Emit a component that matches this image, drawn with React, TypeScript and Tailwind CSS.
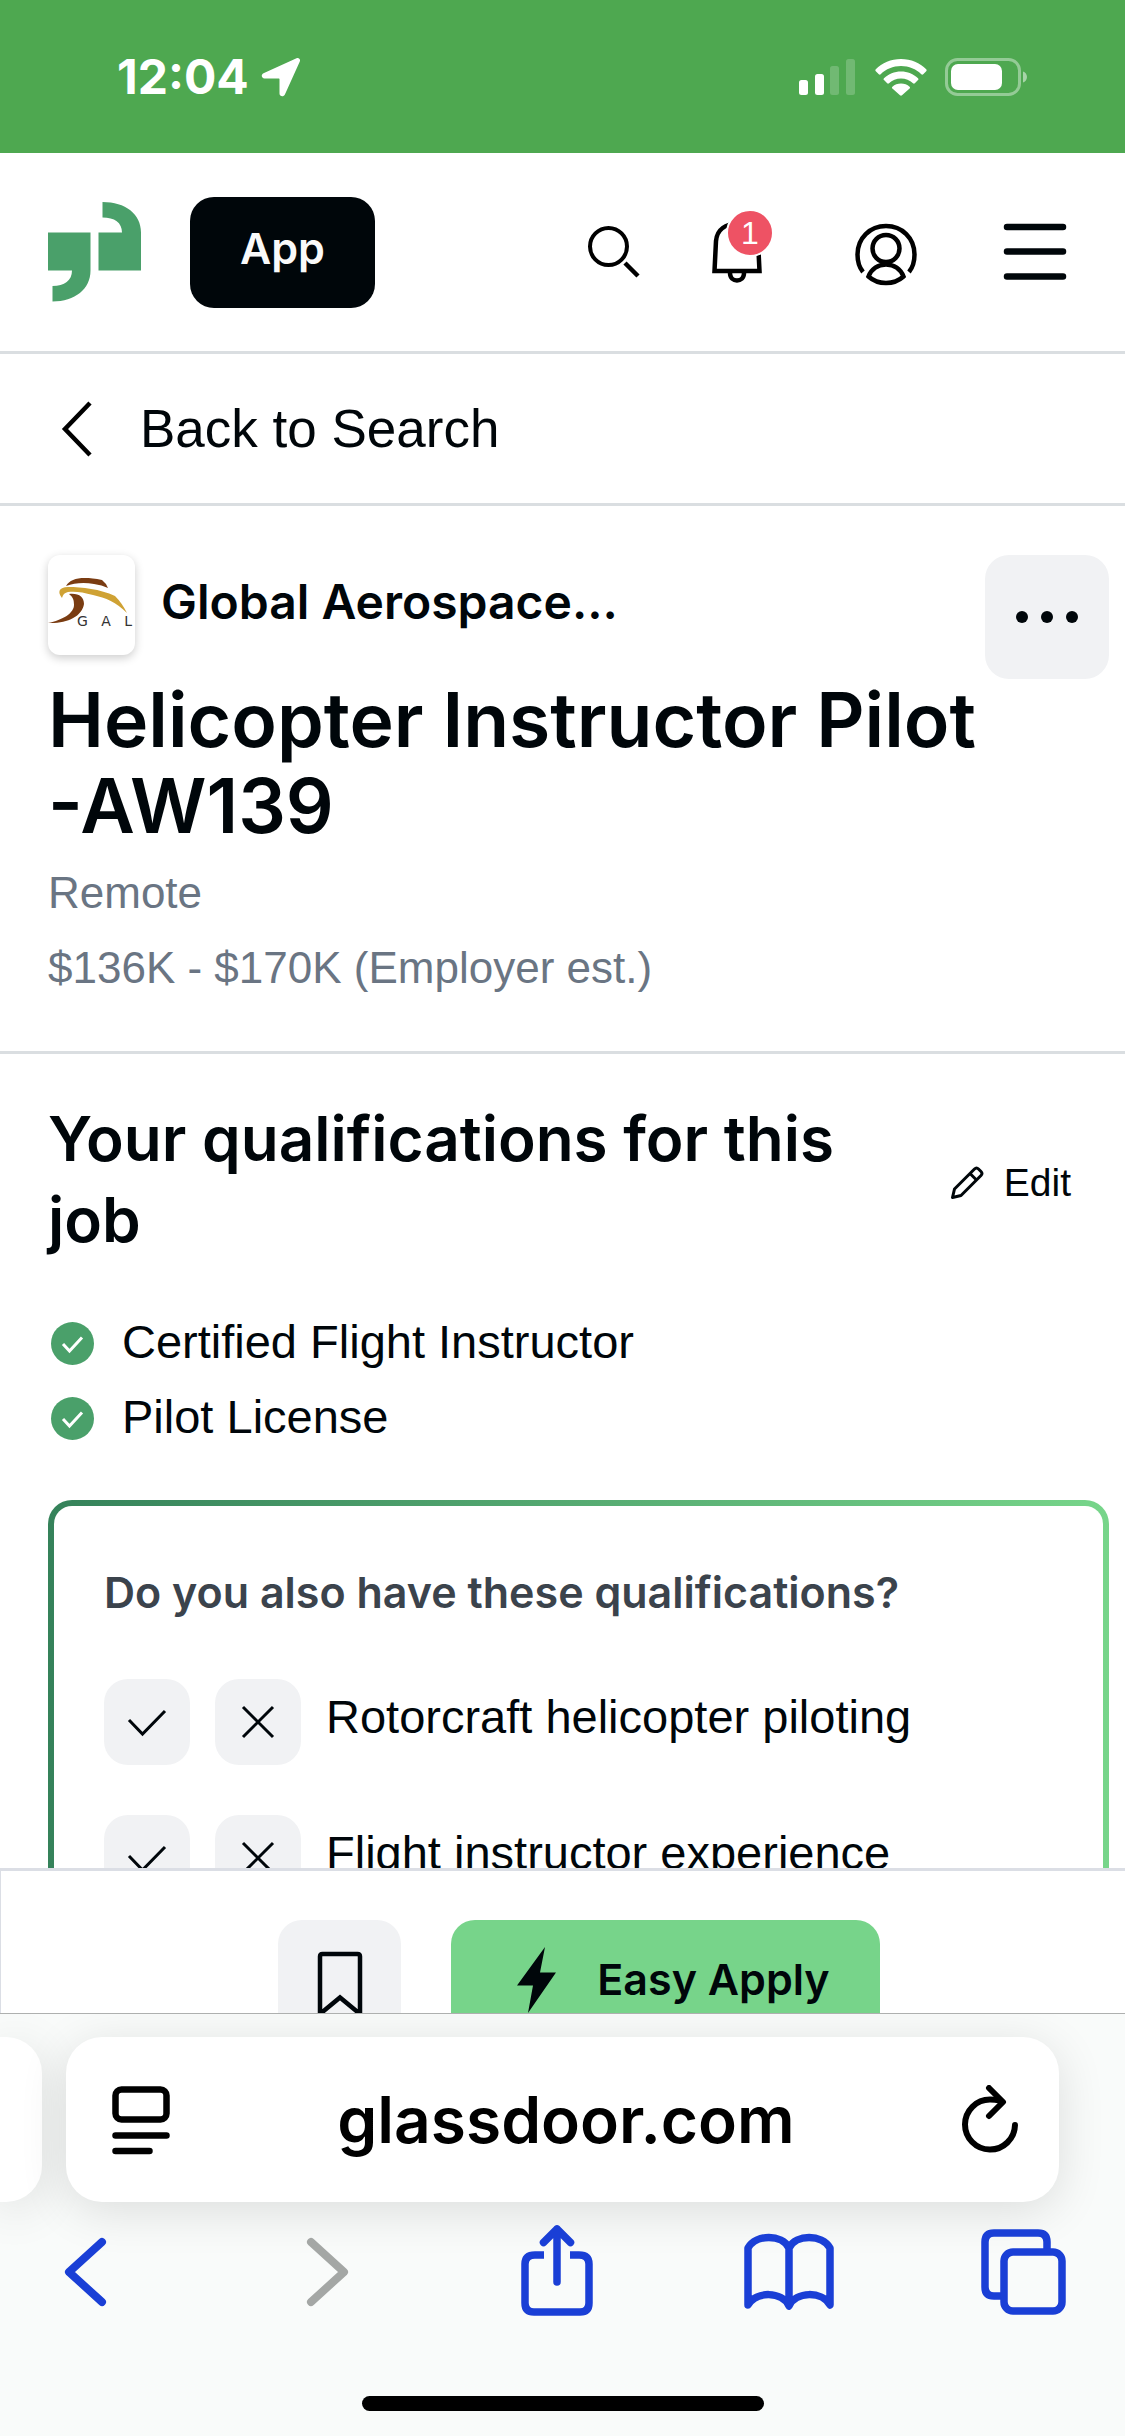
const HAVE = ["Certified Flight Instructor", "Pilot License"];

const ASK = ["Rotorcraft helicopter piloting", "Flight instructor experience"];

function StatusBar() {
  return (
    <div className="flex h-[153px] shrink-0 items-center justify-between bg-[#4ea850] pl-[117px] pr-[97px] text-white">
      <div className="flex items-center gap-3">
        <span className="font-[Inter,sans-serif] text-[48px] font-bold leading-none">12:04</span>
        <svg width="40" height="40" viewBox="0 0 40 40" fill="currentColor">
          <path d="M35.500 1.200 2.500 16.200c-2.800 1.300-2 5.300 1 5.300h14.400c.4 0 .6.200.6.600v14.400c0 3.100 4.100 3.900 5.400 1L38.800 4.500c1-2.200-1.100-4.300-3.300-3.300Z" />
        </svg>
      </div>
      <div className="flex items-center gap-[18px]">
        <svg width="58" height="38" viewBox="0 0 58 38" fill="currentColor">
          <rect x="0" y="22" width="9" height="15" rx="2.500" />
          <rect x="16" y="16" width="9" height="21" rx="2.500" />
          <rect x="31" y="8" width="9" height="29" rx="2.500" opacity=".2" />
          <rect x="47" y="1" width="9" height="36" rx="2.500" opacity=".2" />
        </svg>
        <svg width="52" height="38" viewBox="0 0 52 38" fill="currentColor">
          <path d="M26 1C16 1 7 5 .8 11.300c-.6.600-.6 1.300 0 1.900l3 3c.6.600 1.300.600 1.900 0C11 11 18 8 26 8s15 3 20.300 8.200c.6.600 1.300.600 1.900 0l3-3c.6-.600.6-1.300 0-1.900C45 5 36 1 26 1Z" />
          <path d="M26 13.500c-6.600 0-12.500 2.500-17 6.700-.6.600-.6 1.300 0 1.900l3.200 3.200c.5.500 1.200.5 1.800 0 3.200-3 7.400-4.800 12-4.800s8.800 1.800 12 4.800c.6.500 1.300.5 1.800 0l3.200-3.200c.6-.600.6-1.300 0-1.900-4.500-4.200-10.400-6.700-17-6.700Z" />
          <path d="M26 25.500c-3.300 0-6.300 1.200-8.600 3.200-.6.600-.6 1.300 0 1.900l7.600 6.600c.6.600 1.400.6 2 0l7.600-6.600c.6-.6.600-1.300 0-1.900-2.300-2-5.300-3.200-8.600-3.200Z" />
        </svg>
        <svg width="83" height="38" viewBox="0 0 83 38" fill="none">
          <rect x="1.500" y="1.500" width="73" height="35" rx="11" stroke="white" strokeOpacity=".4" strokeWidth="3" />
          <rect x="6" y="6" width="51" height="26" rx="7" fill="white" />
          <path d="M78 13.500c2.300.7 4 3 4 5.500s-1.700 4.800-4 5.500Z" fill="white" fillOpacity=".5" />
        </svg>
      </div>
    </div>
  );
}

function Header() {
  return (
    <header className="flex h-[201px] shrink-0 items-center justify-between border-b-[3px] border-[#dadee1] pl-12 pr-[58px]">
      <div className="flex items-center gap-[49px]">
        <a href="#" aria-label="Home">
          <svg width="93" height="100" viewBox="0 0 93 100" fill="#4aa06a">
            <path d="M0 30.500h42.500v38C42.500 87 27 99.500 4.500 99.500V84c12 0 19.500-5.500 19.500-15.500H0Z" />
            <path d="M50.500 68.500H93V30.500C93 12 77.500 0 54.500 0v15.500c12 0 19.500 5 19.500 15H50.500Z" />
          </svg>
        </a>
        <button className="flex h-[111px] items-center rounded-3xl bg-[#00060a] px-[50px] pb-2 font-[Inter,sans-serif] text-[43px] font-semibold text-[#fafafa]">
          App
        </button>
      </div>
      <div className="flex items-center">
        <button aria-label="Search" className="mr-[61px]">
          <svg width="64" height="64" viewBox="0 0 64 64" fill="none" stroke="black" strokeWidth="4">
            <ellipse cx="27.500" cy="26.500" rx="18.500" ry="18.500" />
            <path d="m44 43 13 13" strokeWidth="4.500" />
          </svg>
        </button>
        <button aria-label="Notifications, 1 new" className="relative mr-[84px]">
          <svg width="64" height="64" viewBox="0 0 64 64" fill="none" stroke="black" strokeWidth="4.500">
            <path d="M8.500 51 10 21C11 9 20 4 31 4s20 5 21 17l1.500 30Z" />
            <path d="M24 53c0 10 14 10 14 0" />
          </svg>
          <span className="absolute -top-[11px] left-5 flex size-12 items-center justify-center rounded-full border-2 border-white bg-[#ee5264] text-[32px] leading-none text-white">
            1
          </span>
        </button>
        <button aria-label="Profile" className="mr-[85px]">
          <svg width="64" height="64" viewBox="0 0 64 64" fill="none" stroke="black" strokeWidth="4.500" className="overflow-visible">
            <path d="M9 52C4.500 46.500 3.500 40 3.500 34.500 3.500 18 16 6 32 6s28.500 12 28.500 28.500C60.500 40 59.500 46.500 55 52" />
            <circle cx="32" cy="28.500" r="13.500" />
            <path d="M14.500 56.500C17.500 49 24 44.500 32 44.500S46.500 49 49.500 56.500C44.500 61 39 63 32 63S19.500 61 14.500 56.500Z" />
          </svg>
        </button>
        <button aria-label="Menu">
          <svg width="64" height="64" viewBox="0 0 64 64" stroke="#00060a" strokeWidth="6.500" strokeLinecap="round">
            <path d="M4 7h56M4 31.500h56M4 56.500h56" />
          </svg>
        </button>
      </div>
    </header>
  );
}

function GalLogo() {
  return (
    <div className="h-[100px] w-[87px] shrink-0 overflow-hidden rounded-xl bg-white shadow-[0_3px_10px_rgba(0,0,0,0.2)]">
      <svg width="87" height="100" viewBox="0 0 87 100">
        <path d="M18 31C23 23 34 21 54 25q4 3 6 8-6-3-14-4c-10-2-20-1-28 2Z" fill="#7a3c12" />
        <path d="M14 43c-5-6-3-11 6-11 14 0 32 2 47 9q7 7 12 17C68 47 58 43 45 40c-10-3-19-4-25-3-4 1-5 3-6 6Z" fill="#cfa234" />
        <path d="M21 39c10-1 15 3 15 10C34 62 18 69 0 68c15-3 26-10 26-18 0-5-1-8-5-11Z" fill="#7a3c12" />
        <text x="29" y="71" fontSize="14" fontFamily="DejaVu Sans, sans-serif" fill="#333">
          G&nbsp;&nbsp;&nbsp;A&nbsp;&nbsp;&nbsp;L
        </text>
      </svg>
    </div>
  );
}

function JobSummary() {
  return (
    <section className="flex shrink-0 items-start border-b-[3px] border-[#dadee1] pb-[46px] pl-12 pr-4 pt-[49px]">
      <div className="flex-1">
        <div className="flex h-[100px] items-start gap-[26px]">
          <GalLogo />
          <p className="font-[Inter,sans-serif] text-[48px] font-semibold leading-[94px]">Global Aerospace...</p>
        </div>
        <h1 className="mt-[22px] font-[Inter,sans-serif] text-[75px] font-semibold leading-[86px]">
          Helicopter Instructor Pilot
          <br />
          -AW139
        </h1>
        <div className="mt-[6px] text-[44px] leading-[75px] text-[#6a7583]">
          <p>Remote</p>
          <p>$136K - $170K (Employer est.)</p>
        </div>
      </div>
      <button aria-label="More options" className="flex size-[124px] shrink-0 items-center justify-center gap-[13px] rounded-3xl bg-[#f1f2f4]">
        <span className="size-3 rounded-full bg-[#00060a]" />
        <span className="size-3 rounded-full bg-[#00060a]" />
        <span className="size-3 rounded-full bg-[#00060a]" />
      </button>
    </section>
  );
}

function AskRow({ label }: { label: string }) {
  return (
    <li className="flex items-start gap-[25px]">
      <button aria-label={`I have ${label}`} className="rounded-3xl bg-[#f1f2f4]">
        <svg width="86" height="86" viewBox="0 0 86 86" fill="none" stroke="#00060a" strokeWidth="3">
          <path d="m25 41 13.500 14L61 32" />
        </svg>
      </button>
      <button aria-label={`I do not have ${label}`} className="rounded-3xl bg-[#f1f2f4]">
        <svg width="86" height="86" viewBox="0 0 86 86" fill="none" stroke="#00060a" strokeWidth="3">
          <path d="m28 28 30 30M58 28 28 58" />
        </svg>
      </button>
      <span className="text-[47px] leading-[75px]">{label}</span>
    </li>
  );
}

function Qualifications() {
  return (
    <section className="pl-12 pr-4 pt-[44px]">
      <div className="flex items-center">
        <h2 className="flex-1 font-[Inter,sans-serif] text-[62px] font-semibold leading-[81px]">
          Your qualifications for this job
        </h2>
        <button className="flex shrink-0 items-center gap-5 px-[38px] pt-2 text-[39px]">
          <svg width="34" height="34" viewBox="0 0 34 34" fill="none" stroke="#00060a" strokeWidth="3">
            <path d="m2.500 31.500 2-8.500L24.500 3q2-2 4 0l2.500 2.500q2 2 0 4L11 29.500Z" strokeLinejoin="round" />
            <path d="m20 7.500 6.500 6.500" />
          </svg>
          Edit
        </button>
      </div>

      <ul className="mt-11 text-[47px] leading-[75px]">
        {HAVE.map((q) => (
          <li key={q} className="flex items-center gap-7 pl-[3px]">
            <svg width="43" height="43" viewBox="0 0 43 43" className="mt-1">
              <circle cx="21.500" cy="21.500" r="21.500" fill="#4aa06a" />
              <path d="m12 22 6.500 7L31 15.500" fill="none" stroke="white" strokeWidth="3" />
            </svg>
            {q}
          </li>
        ))}
      </ul>

      {/* Gradient frame */}
      <div className="mt-[46px] rounded-3xl bg-linear-to-r from-[#35825a] to-[#77d58a] p-[6px]">
        <div className="rounded-[18px] bg-white px-[50px] pb-12 pt-[56px]">
          <h3 className="font-[Inter,sans-serif] text-[43px] font-semibold leading-[60px] text-[#3b434c]">
            Do you also have these qualifications?
          </h3>
          <ul className="mt-[57px] space-y-[50px]">
            {ASK.map((q) => (
              <AskRow key={q} label={q} />
            ))}
          </ul>
        </div>
      </div>
    </section>
  );
}

function ApplyBar() {
  return (
    <div className="flex h-[145px] shrink-0 items-start justify-center gap-[50px] overflow-hidden border-l border-t-[3px] border-[#dbdee5] bg-white pl-12 pr-4 pt-[49px]">
      <button aria-label="Save job" className="flex h-[123px] w-[123px] shrink-0 justify-center rounded-3xl bg-[#f1f2f4] pt-[31px]">
        <svg width="46" height="66" viewBox="0 0 46 66" fill="none" stroke="#00060a" strokeWidth="4.500">
          <path d="M3 63V5.500Q3 3 5.500 3h35Q43 3 43 5.500V63L23 46.500Z" />
        </svg>
      </button>
      <button className="flex h-[123px] shrink-0 items-center gap-10 rounded-3xl bg-[#77d48a] pb-1 pl-[66px] pr-[50px] font-[Inter,sans-serif] text-[43px] font-semibold">
        <svg width="40" height="66" viewBox="0 0 40 66" fill="#00060a">
          <path d="M28 0 0 38.500h16L11 66l28-40.500H23Z" />
        </svg>
        Easy Apply
      </button>
    </div>
  );
}

function BrowserBar() {
  return (
    <footer className="shrink-0 overflow-hidden border-t border-[#aeb0af] bg-[#f9fbfa] pb-[25px] pt-[23px]">
      <div className="flex h-[165px] gap-6 pr-[66px]">
        <div className="w-[42px] shrink-0 rounded-r-[36px] bg-white shadow-[0_9px_48px_rgba(0,0,0,0.12)]" />
        <div className="flex flex-1 items-center justify-between rounded-[36px] bg-white pl-[45px] pr-10 shadow-[0_9px_48px_rgba(0,0,0,0.12)]">
          <button aria-label="Page menu">
            <svg width="60" height="70" viewBox="0 0 60 70" fill="none" stroke="black" strokeWidth="6.500" strokeLinecap="round">
              <rect x="4.500" y="4.500" width="51" height="30" rx="6" />
              <path d="M4.500 50.500h51M4.500 66h34" />
            </svg>
          </button>
          <span className="font-[Inter,sans-serif] text-[64px] font-semibold text-black">glassdoor.com</span>
          <button aria-label="Reload">
            <svg width="58" height="70" viewBox="0 0 58 70" fill="none" stroke="black" strokeWidth="6" strokeLinecap="round" strokeLinejoin="round">
              <path d="M39 15.500Q34 14.500 29 14.500A25 25 0 1 0 54 40" />
              <path d="m28 3 14 14-14 14" />
            </svg>
          </button>
        </div>
      </div>

      <nav className="mt-[22px] flex justify-between pl-10 pr-[57px] text-[#1a3fd6]">
        <button aria-label="Back">
          <svg width="92" height="92" viewBox="0 0 92 92" fill="none" stroke="currentColor" strokeWidth="8" strokeLinecap="round" strokeLinejoin="round">
            <path d="M62 18 29 48l33 30" />
          </svg>
        </button>
        <button aria-label="Forward" disabled className="text-[#a4a7a5]">
          <svg width="92" height="92" viewBox="0 0 92 92" fill="none" stroke="currentColor" strokeWidth="8" strokeLinecap="round" strokeLinejoin="round">
            <path d="m37 18 33 30-33 30" />
          </svg>
        </button>
        <button aria-label="Share">
          <svg width="92" height="92" viewBox="0 0 92 92" fill="none" stroke="currentColor" strokeWidth="7.500" strokeLinecap="round" strokeLinejoin="round">
            <path d="M36 31h-9Q17 31 17 40v39Q17 88 26 88h46q9 0 9-9V40q0-9-10-9h-9" strokeLinecap="butt" />
            <path d="M49 58V5M35.500 18.500 49 5l13.500 13.500" />
          </svg>
        </button>
        <button aria-label="Bookmarks">
          <svg width="92" height="92" viewBox="0 0 92 92" fill="none" stroke="currentColor" strokeWidth="7.500" strokeLinecap="round" strokeLinejoin="round">
            <path d="M47 24C40 10 14 10 6 24v57c8-14 34-14 41 1 7-15 33-15 41-1V24c-8-14-34-14-41 0ZM47 24v56" />
          </svg>
        </button>
        <button aria-label="Tabs">
          <svg width="92" height="92" viewBox="0 0 92 92" fill="none" stroke="currentColor" strokeWidth="7.500">
            <path d="M27 72h-9q-9 0-9-9V18q0-9 9-9h44q9 0 9 9v9" />
            <rect x="28" y="28" width="58" height="59" rx="9" />
          </svg>
        </button>
      </nav>

      <div className="mx-auto mt-20 h-[15px] w-[402px] rounded-full bg-black" />
    </footer>
  );
}

export default function App() {
  return (
    <div className="flex h-screen flex-col bg-white font-['Liberation_Sans',Arial,sans-serif] text-[#00060a]">
      <StatusBar />
      <Header />
      <a href="#" className="flex h-[152px] shrink-0 items-center gap-[47px] border-b-[3px] border-[#dadee1] pl-[61px] text-[53px]">
        <svg width="32" height="56" viewBox="0 0 32 56" fill="none" stroke="black" strokeWidth="4.500">
          <path d="M29 2 4 28l25 26" />
        </svg>
        Back to Search
      </a>
      <main className="min-h-0 flex-1 overflow-hidden">
        <JobSummary />
        <Qualifications />
      </main>
      <ApplyBar />
      <BrowserBar />
    </div>
  );
}
